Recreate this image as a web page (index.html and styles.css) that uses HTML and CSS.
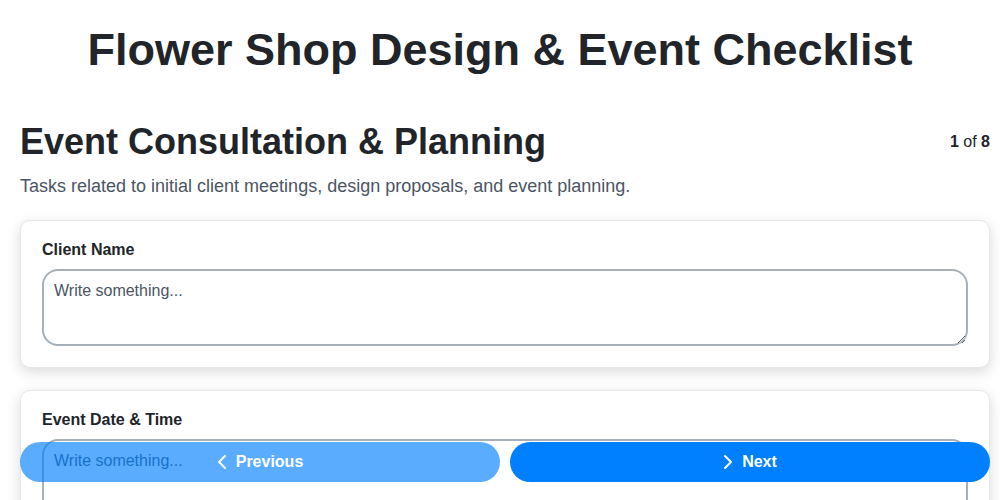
FILE: index.html
```html
<!DOCTYPE html>
<html lang="en">
<head>
<meta charset="utf-8">
<title>Flower Shop Design & Event Checklist</title>
<link rel="stylesheet" href="styles.css">
</head>
<body>
<div class="page">
  <h1 class="title">Flower Shop Design &amp; Event Checklist</h1>
  <div class="section-head">
    <h2 class="section-title">Event Consultation &amp; Planning</h2>
    <div class="counter"><b>1</b> of <b>8</b></div>
  </div>
  <p class="section-desc">Tasks related to initial client meetings, design proposals, and event planning.</p>
  <div class="card">
    <label class="label">Client Name</label>
    <textarea class="field" placeholder="Write something..."></textarea>
  </div>
  <div class="card">
    <label class="label">Event Date &amp; Time</label>
    <textarea class="field" placeholder="Write something..."></textarea>
  </div>
</div>
<div class="nav">
  <button class="btn btn-prev">
    <svg width="10" height="16" viewBox="0 0 10 16"><path d="M8 2 L2 8 L8 14" fill="none" stroke="#fff" stroke-width="2" stroke-linecap="round" stroke-linejoin="round"/></svg>
    Previous
  </button>
  <button class="btn btn-next">
    <svg width="10" height="16" viewBox="0 0 10 16"><path d="M2 2 L8 8 L2 14" fill="none" stroke="#fff" stroke-width="2" stroke-linecap="round" stroke-linejoin="round"/></svg>
    Next
  </button>
</div>
</body>
</html>
```

FILE: styles.css
```css
* { box-sizing: border-box; }
html, body { margin: 0; padding: 0; background: #fff; }
body {
  font-family: "Liberation Sans", Arial, sans-serif;
  color: #212529;
}
.page {
  padding: 0 10px 20px 20px;
}
.title {
  margin: 0 0 0 -10px;
  padding-top: 25px;
  font-size: 45px;
  line-height: 50px;
  text-align: center;
  font-weight: 700;
  color: #212529;
}
.section-head {
  display: flex;
  justify-content: space-between;
  align-items: flex-start;
  margin-top: 45px;
}
.section-title {
  margin: 0;
  font-size: 36px;
  line-height: 44px;
  font-weight: 700;
}
.counter {
  font-size: 16px;
  padding-top: 13px;
  color: #212529;
}
.section-desc {
  margin: 10px 0 22px;
  font-size: 18px;
  line-height: 24px;
  color: #4b5563;
}
.card {
  background: #fff;
  border: 1px solid #e5e7eb;
  border-radius: 10px;
  padding: 19px 21px 21px;
  margin-bottom: 22px;
  box-shadow: 0 4px 14px rgba(0, 0, 0, 0.15);
}
.label {
  display: block;
  font-size: 16px;
  line-height: 20px;
  font-weight: 700;
  margin-bottom: 9px;
  color: #212529;
}
.field {
  display: block;
  width: 100%;
  height: 77px;
  border: 2px solid #a7afb8;
  border-radius: 16px;
  padding: 10px 10px;
  font-family: "Liberation Sans", Arial, sans-serif;
  font-size: 16px;
  line-height: 20px;
  color: #212529;
  background: #fff;
  resize: vertical;
  outline: none;
}
.field::placeholder { color: #4b5563; opacity: 1; }
.nav {
  position: fixed;
  left: 20px;
  right: 10px;
  bottom: 18px;
  display: flex;
  gap: 10px;
}
.btn {
  flex: 1;
  height: 40px;
  border: none;
  border-radius: 20px;
  background: #0080ff;
  color: #fff;
  font-family: "Liberation Sans", Arial, sans-serif;
  font-size: 16px;
  font-weight: 700;
  display: flex;
  align-items: center;
  justify-content: center;
  gap: 9px;
  cursor: pointer;
}
.btn-prev { opacity: 0.65; }
```
